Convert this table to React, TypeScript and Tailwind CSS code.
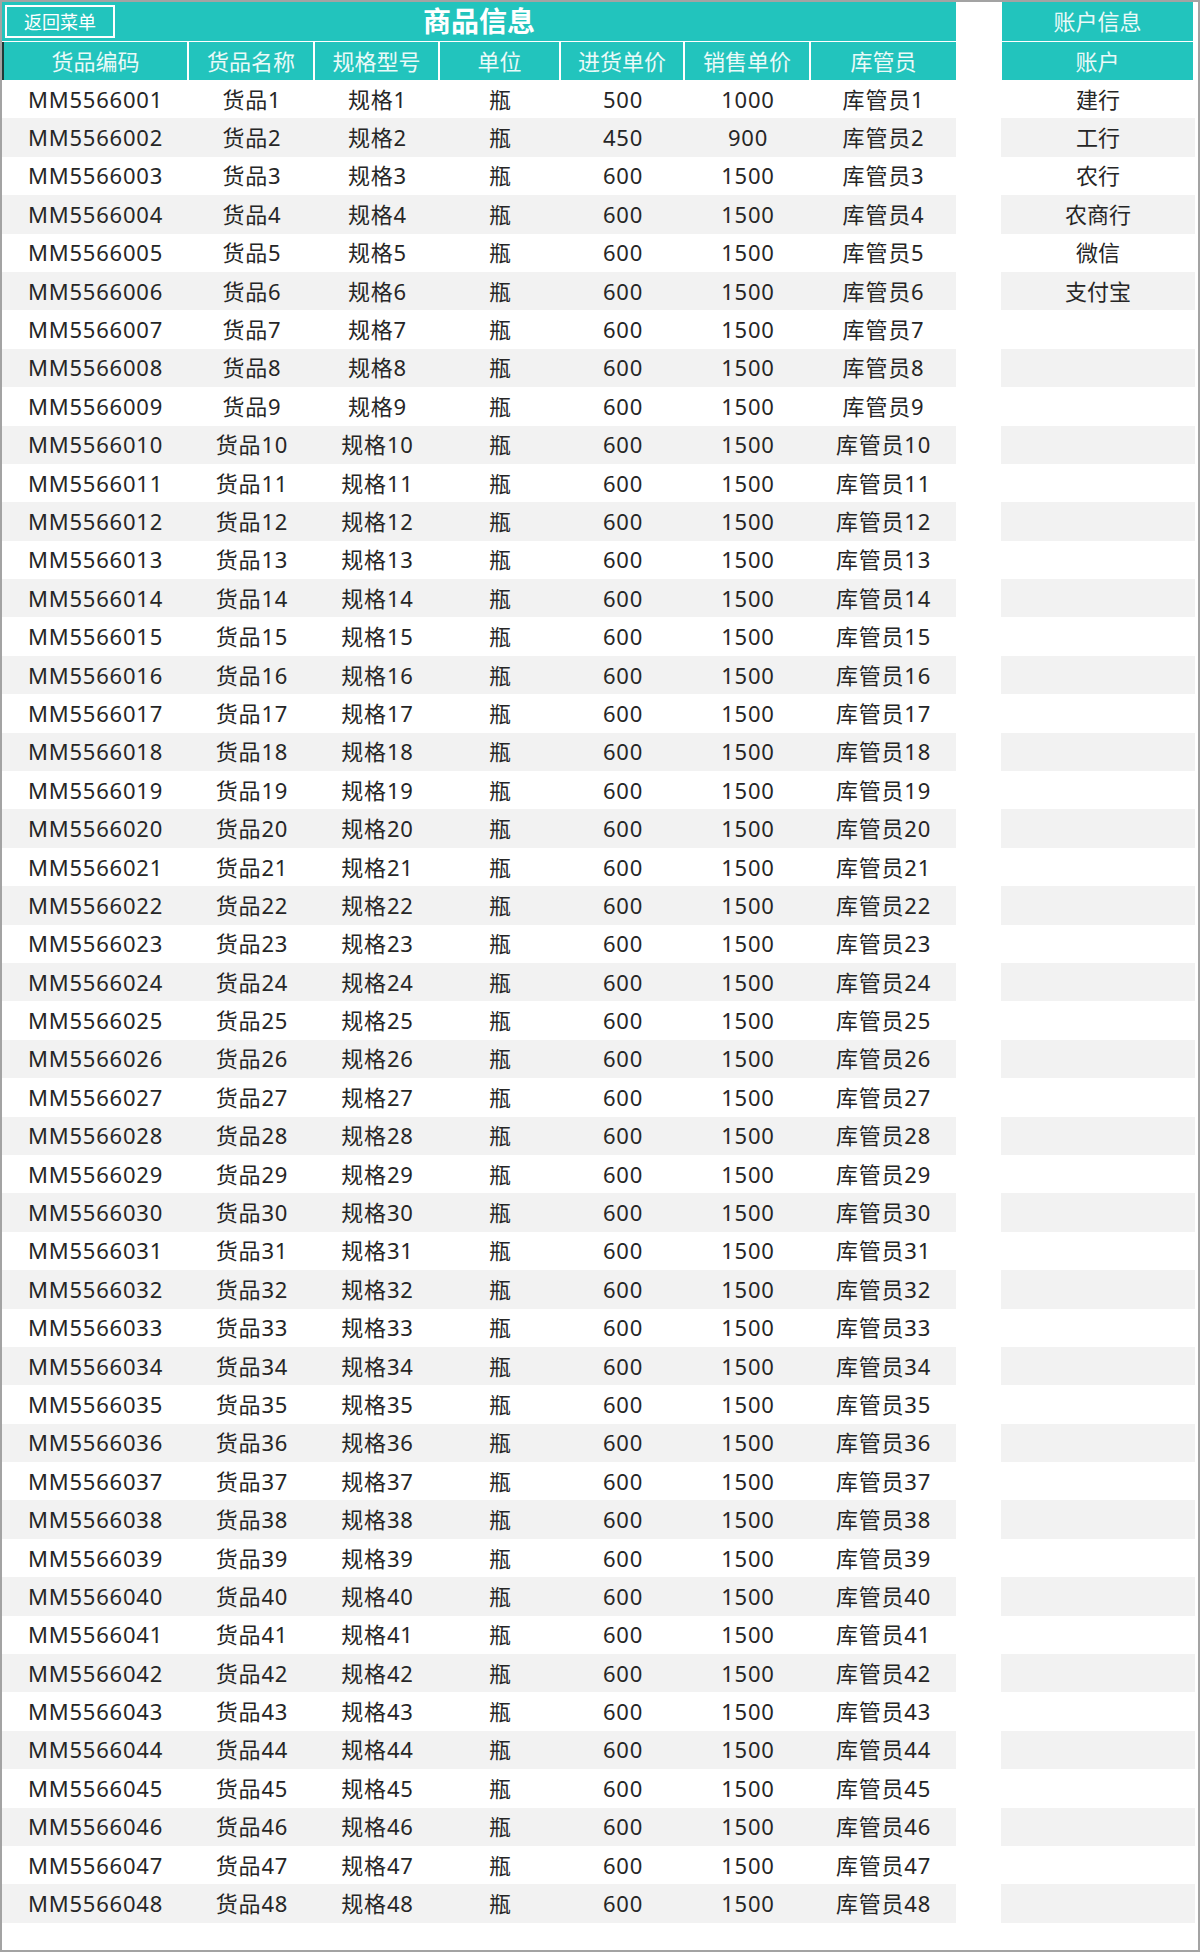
import React from 'react';

type Goods = {
  code: string;
  name: string;
  spec: string;
  unit: string;
  buy: number;
  sell: number;
  keeper: string;
};

const goods: Goods[] = Array.from({ length: 48 }, (_, i) => {
  const n = i + 1;
  return {
    code: `MM5566${String(n).padStart(3, '0')}`,
    name: `货品${n}`,
    spec: `规格${n}`,
    unit: '瓶',
    buy: n === 1 ? 500 : n === 2 ? 450 : 600,
    sell: n === 1 ? 1000 : n === 2 ? 900 : 1500,
    keeper: `库管员${n}`,
  };
});

const accounts = ['建行', '工行', '农行', '农商行', '微信', '支付宝'];

// column widths, left to right
const cols = [
  { title: '货品编码', w: 'w-[187px]' },
  { title: '货品名称', w: 'w-[126px]' },
  { title: '规格型号', w: 'w-[125px]' },
  { title: '单位', w: 'w-[121px]' },
  { title: '进货单价', w: 'w-[124px]' },
  { title: '销售单价', w: 'w-[126px]' },
  { title: '库管员', w: 'w-[145px]' },
];

const Cell = ({ w, children }: { w: string; children: React.ReactNode }) => (
  <div className={`${w} shrink-0 flex items-center justify-center`}>{children}</div>
);

export default function App() {
  return (
    <div className="w-[1200px] h-[1952px] box-border border-2 border-[#a3a3a3] bg-white flex font-['Noto_Sans','Noto_Sans_CJK_SC',sans-serif] text-[22px] text-[#262626] tracking-[0.8px]">
      {/* goods table */}
      <div className="w-[954px] flex flex-col">
        <div className="h-[39px] bg-[#22c4bd] grid grid-cols-[1fr_auto_1fr] items-center">
          <div className="pl-[3px]">
            <button className="h-[33px] w-[110px] box-border border-2 border-white text-white text-[18px] leading-none tracking-normal flex items-center justify-center">
              返回菜单
            </button>
          </div>
          <div className="text-white text-[28px] font-bold leading-none tracking-normal -mt-[2px]">商品信息</div>
          <div />
        </div>
        <div className="h-[38px] mt-[1px] flex border-l-2 border-[#1f3a38] tracking-normal">
          {cols.map((c, i) => (
            <div
              key={c.title}
              className={`${i === 0 ? 'w-[185px]' : c.w} shrink-0 box-border bg-[#22c4bd] text-[#eafaf8] flex items-center justify-center ${
                i < cols.length - 1 ? 'border-r-2 border-white' : ''
              }`}
            >
              {c.title}
            </div>
          ))}
        </div>
        {goods.map((g, i) => (
          <div key={g.code} className={`h-[38.4px] flex ${i % 2 === 1 ? 'bg-[#f2f2f2]' : 'bg-white'}`}>
            <Cell w={cols[0].w}>{g.code}</Cell>
            <Cell w={cols[1].w}>{g.name}</Cell>
            <Cell w={cols[2].w}>{g.spec}</Cell>
            <Cell w={cols[3].w}>{g.unit}</Cell>
            <Cell w={cols[4].w}>{g.buy}</Cell>
            <Cell w={cols[5].w}>{g.sell}</Cell>
            <Cell w={cols[6].w}>{g.keeper}</Cell>
          </div>
        ))}
      </div>

      {/* account panel */}
      <div className="ml-[46px] w-[194px] flex flex-col tracking-normal">
        <div className="w-[191px] h-[39px] bg-[#22c4bd] text-[#eafaf8] flex items-center justify-center">账户信息</div>
        <div className="w-[191px] h-[38px] mt-[1px] bg-[#22c4bd] text-[#eafaf8] flex items-center justify-center">账户</div>
        {goods.map((_, i) => (
          <div
            key={i}
            className={`h-[38.4px] w-[194px] -ml-[1px] flex items-center justify-center ${i % 2 === 1 ? 'bg-[#f2f2f2]' : 'bg-white'}`}
          >
            {accounts[i] ?? ''}
          </div>
        ))}
      </div>
    </div>
  );
}
